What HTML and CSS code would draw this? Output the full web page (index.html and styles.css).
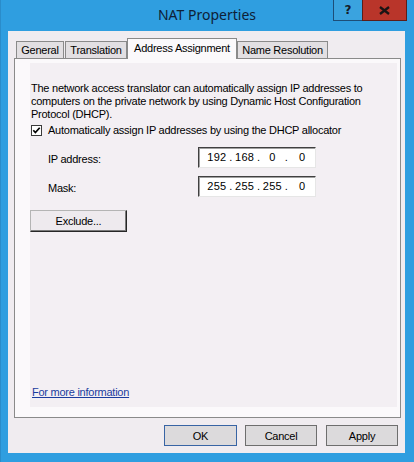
FILE: index.html
```html
<!DOCTYPE html>
<html>
<head>
<meta charset="utf-8">
<link rel="stylesheet" href="styles.css">
</head>
<body>
<div class="window">
  <div class="titlebar">
    <div class="title">NAT Properties</div>
    <div class="caption-buttons">
      <div class="cap-btn help">?</div>
      <div class="cap-btn close">
        <svg width="11" height="9" viewBox="0 0 11 9"><path d="M1 1 L10 8 M10 1 L1 8" stroke="#1a1414" stroke-width="2.3" fill="none"/></svg>
      </div>
    </div>
  </div>
  <div class="client">
    <div class="tabs">
      <div class="tab t-general">General</div>
      <div class="tab t-translation">Translation</div>
      <div class="tab active t-address">Address Assignment</div>
      <div class="tab t-name">Name Resolution</div>
    </div>
    <div class="panel">
      <div class="page">
        <p class="desc">The network access translator can automatically assign IP addresses to<br>computers on the private network by using Dynamic Host Configuration<br>Protocol (DHCP).</p>
        <div class="check-row">
          <span class="checkbox"><svg width="11" height="11" viewBox="0 0 11 11"><rect x="0.5" y="0.5" width="10" height="10" fill="#fff" stroke="#3a3a3a"/><path d="M2.3 5.3 L4.4 7.6 L8.7 2.8" stroke="#000" stroke-width="1.7" fill="none"/></svg></span>
          <span class="check-label">Automatically assign IP addresses by using the DHCP allocator</span>
        </div>
        <div class="field-row">
          <span class="field-label">IP address:</span>
          <div class="ipbox">
            <span class="oct">192</span><span class="dot">.</span><span class="oct">168</span><span class="dot">.</span><span class="oct">0</span><span class="dot">.</span><span class="oct last">0</span>
          </div>
        </div>
        <div class="field-row mask-row">
          <span class="field-label">Mask:</span>
          <div class="ipbox">
            <span class="oct">255</span><span class="dot">.</span><span class="oct">255</span><span class="dot">.</span><span class="oct">255</span><span class="dot">.</span><span class="oct last">0</span>
          </div>
        </div>
        <div class="exclude-wrap"><button class="classic-btn">Exclude...</button></div>
        <a class="more-link" href="#">For more information</a>
      </div>
    </div>
    <div class="dialog-buttons">
      <button class="btn default">OK</button>
      <button class="btn cancel">Cancel</button>
      <button class="btn apply">Apply</button>
    </div>
  </div>
</div>
</body>
</html>
```
FILE: styles.css
```css
html, body {
  margin: 0;
  padding: 0;
}
body {
  width: 414px;
  height: 462px;
  overflow: hidden;
  font-family: "Liberation Sans", Arial, sans-serif;
  font-size: 11px;
  letter-spacing: -0.25px;
  color: #000;
}
.window {
  width: 414px;
  height: 462px;
  background: #2f9ee0;
  box-sizing: border-box;
  border-left: 1px solid #2a8cca;
  display: flex;
  flex-direction: column;
}
.titlebar {
  height: 31px;
  display: grid;
  grid-template-columns: 1fr auto 1fr;
  padding: 0 7px 0 6px;
}
.title {
  grid-column: 2;
  align-self: center;
  font-family: "Noto Sans", "Open Sans", sans-serif;
  font-size: 14px;
  letter-spacing: 0;
  color: #0e2136;
  line-height: 18px;
  margin-top: -1px;
}
.caption-buttons {
  grid-column: 3;
  justify-self: end;
  align-self: start;
  display: flex;
}
.cap-btn {
  height: 21px;
  box-sizing: border-box;
  display: flex;
  align-items: center;
  justify-content: center;
  border: 1px solid #1d4e78;
  border-top: 0;
}
.help {
  width: 29px;
  background: #3aa3df;
  font-family: "DejaVu Sans", sans-serif;
  font-weight: bold;
  font-size: 12px;
  letter-spacing: 0;
  color: #141c28;
  border-right: 0;
}
.close {
  width: 45px;
  background: #b9352a;
  border-color: #5c1d18;
}
.client {
  margin: 0 9px 9px 7px;
  height: 422px;
  background: #f0ecf0;
  display: flex;
  flex-direction: column;
}
.tabs {
  display: flex;
  align-items: flex-end;
  margin: 7px 0 -1px 8px;
  height: 21px;
  position: relative;
  z-index: 1;
}
.tab {
  box-sizing: border-box;
  height: 17px;
  margin-bottom: 1px;
  border: 1px solid #8a8a8a;
  border-bottom: 0;
  background: #e2dfe2;
  text-align: center;
  line-height: 16px;
}
.t-general { width: 48px; margin-right: 1px; }
.t-translation { width: 62px; }
.t-address { width: 110px; }
.t-name { width: 91px; }
.tab.active {
  height: 21px;
  margin-bottom: 0;
  background: #fbf9fb;
  line-height: 18px;
}
.panel {
  margin: 0 4px 0 6px;
  height: 360px;
  box-sizing: border-box;
  border: 1px solid #8a8a8a;
  background: #fbf9fb;
  display: flex;
  flex-direction: column;
}
.page {
  flex: 1;
  margin: 4px 3px 10px 15px;
  background: #f3eff3;
  display: flex;
  flex-direction: column;
  padding: 19px 0 0 1px;
}
.desc {
  margin: 0;
  line-height: 13px;
}
.check-row {
  margin-top: 3px;
  height: 13px;
  display: flex;
  align-items: center;
}
.checkbox {
  width: 11px;
  height: 11px;
  margin-right: 6px;
  display: flex;
}
.check-label {
  line-height: 13px;
}
.field-row {
  margin-top: 10px;
  height: 21px;
  display: flex;
  align-items: center;
  padding-left: 17px;
}
.mask-row {
  margin-top: 8px;
}
.field-label {
  width: 150px;
  line-height: 13px;
  margin-top: 4px;
}
.ipbox {
  width: 118px;
  height: 21px;
  box-sizing: border-box;
  background: #fff;
  border-top: 1px solid #404040;
  border-left: 1px solid #404040;
  border-right: 1px solid #e6e6e6;
  border-bottom: 1px solid #e6e6e6;
  box-shadow: inset 1px 1px 0 #a0a0a0;
  display: flex;
  align-items: center;
  padding-left: 7px;
  line-height: 13px;
}
.oct {
  width: 22px;
  text-align: center;
  letter-spacing: 0.3px;
}
.oct.last {
  width: 26px;
}
.dot {
  width: 6px;
  text-align: center;
}
.exclude-wrap {
  margin-top: 13px;
  display: flex;
}
.classic-btn {
  margin: 0 0 0 -1px;
  width: 97px;
  height: 22px;
  box-sizing: border-box;
  font: inherit;
  letter-spacing: -0.25px;
  color: #000;
  background: #eeeaee;
  border-top: 1px solid #b4b4b4;
  border-left: 1px solid #b4b4b4;
  border-right: 1px solid #262626;
  border-bottom: 1px solid #262626;
  box-shadow: inset -1px -1px 0 #7a7a7a;
  padding: 0;
}
.more-link {
  margin-top: auto;
  margin-bottom: 8px;
  margin-left: 1px;
  line-height: 13px;
  color: #1a3c9e;
  text-decoration: underline;
  align-self: flex-start;
}
.dialog-buttons {
  margin-top: 7px;
  display: flex;
  justify-content: flex-end;
  padding-right: 7px;
}
.btn {
  height: 21px;
  width: 72px;
  box-sizing: border-box;
  font: inherit;
  letter-spacing: -0.25px;
  color: #000;
  background: #dcdadc;
  border: 1px solid #6e6e6e;
  padding: 0;
}
.btn.default {
  width: 73px;
  border-color: #3864a4;
}
.btn.cancel {
  margin-left: 8px;
}
.btn.apply {
  margin-left: 9px;
}
```
